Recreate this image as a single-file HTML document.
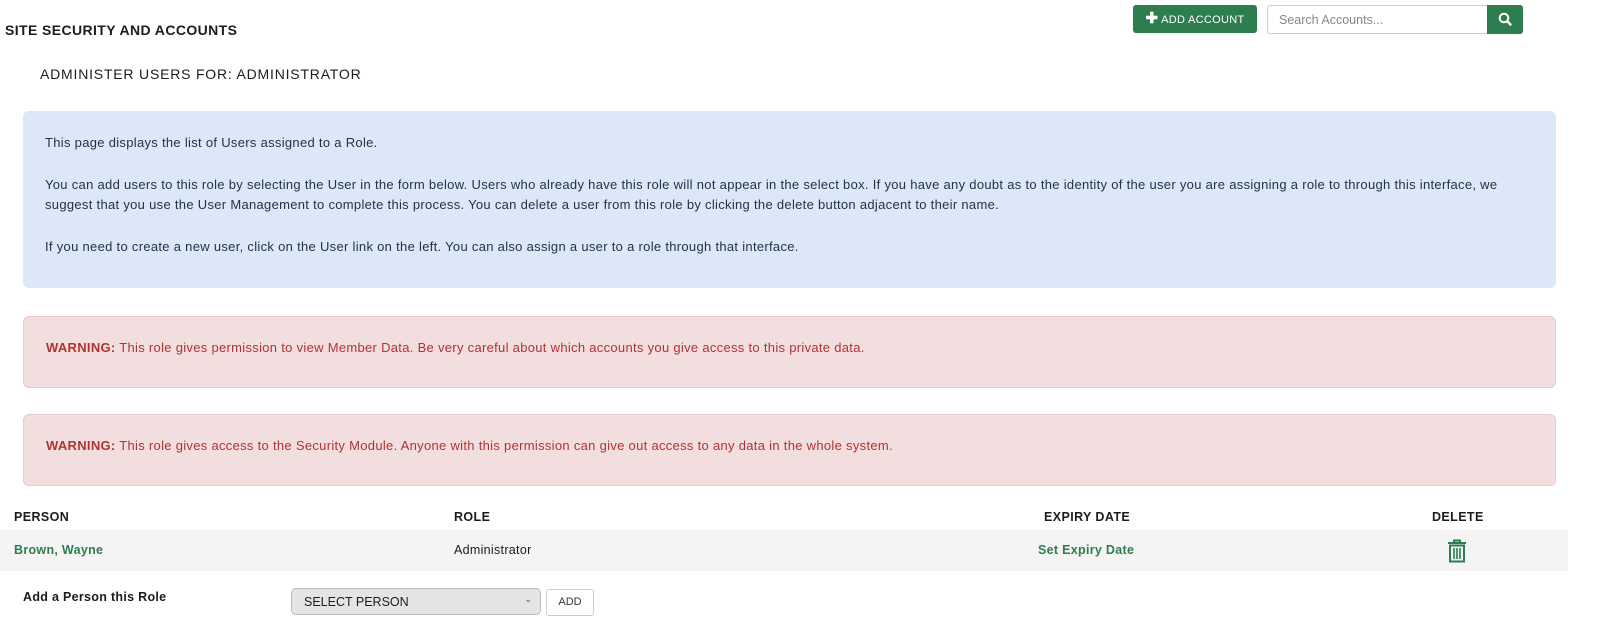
<!DOCTYPE html>
<html><head><meta charset="utf-8"><style>
*{box-sizing:border-box;margin:0;padding:0}
body{width:1600px;height:641px;background:#fff;font-family:"Liberation Sans",sans-serif;color:#1c1c1c;position:relative;overflow:hidden}
.abs{position:absolute}
h1{position:absolute;left:5px;top:22px;font-size:14px;font-weight:bold;letter-spacing:.4px}
h2{position:absolute;left:40px;top:66px;font-size:14px;font-weight:normal;letter-spacing:.8px}
.btn{left:1133px;top:5px;width:124px;height:28px;background:#2e7d4f;border-radius:3px;color:#fff;font-size:11px;letter-spacing:.3px;line-height:28px;text-align:center}
.search{left:1267px;top:5px;width:221px;height:29px;border:1px solid #ccc;border-radius:3px 0 0 3px;font-size:12.5px;color:#888;padding:7px 11px}
.sbtn{left:1487px;top:5px;width:36px;height:29px;background:#2e7d4f;border-radius:0 3px 3px 0}
.box{position:absolute;left:23px;width:1533px;border-radius:6px;font-size:13px;letter-spacing:.3px;line-height:20px;padding:0 22px}
.info{top:111px;height:177px;background:#dce8f8;color:#23324a;padding-top:22px}
.info p{margin-bottom:22px}
.warn{background:#f2dedf;border:1px solid #ecc9cb;color:#b23232;padding-top:21px;height:72px}
.hd{top:510px;font-size:12.5px;font-weight:bold;letter-spacing:.4px}
.row{left:0;top:530px;width:1568px;height:41px;background:#f4f4f4}
.g{color:#2e7d4f;font-weight:bold;font-size:12.5px;letter-spacing:.3px}
</style></head><body>
<h1>SITE SECURITY AND ACCOUNTS</h1>
<h2>ADMINISTER USERS FOR: ADMINISTRATOR</h2>
<div class="abs btn"><b style="font-size:15px">✚</b> ADD ACCOUNT</div>
<div class="abs search">Search Accounts...</div>
<div class="abs sbtn"><svg width="36" height="29" viewBox="0 0 36 29"><circle cx="17" cy="13" r="4.3" fill="none" stroke="#fff" stroke-width="2"/><path d="M20 16l3.5 3.5" stroke="#fff" stroke-width="2.4" stroke-linecap="round"/></svg></div>
<div class="box info">
<p>This page displays the list of Users assigned to a Role.</p>
<p>You can add users to this role by selecting the User in the form below. Users who already have this role will not appear in the select box. If you have any doubt as to the identity of the user you are assigning a role to through this interface, we suggest that you use the User Management to complete this process. You can delete a user from this role by clicking the delete button adjacent to their name.</p>
<p>If you need to create a new user, click on the User link on the left. You can also assign a user to a role through that interface.</p>
</div>
<div class="box warn" style="top:316px"><b>WARNING:</b> This role gives permission to view Member Data. Be very careful about which accounts you give access to this private data.</div>
<div class="box warn" style="top:414px"><b>WARNING:</b> This role gives access to the Security Module. Anyone with this permission can give out access to any data in the whole system.</div>
<div class="abs hd" style="left:14px">PERSON</div>
<div class="abs hd" style="left:454px">ROLE</div>
<div class="abs hd" style="left:1044px">EXPIRY DATE</div>
<div class="abs hd" style="left:1432px">DELETE</div>
<div class="abs row"></div>
<div class="abs g" style="left:14px;top:543px">Brown, Wayne</div>
<div class="abs" style="left:454px;top:543px;font-size:12.5px;letter-spacing:.3px">Administrator</div>
<div class="abs g" style="left:1038px;top:543px">Set Expiry Date</div>
<svg class="abs" style="left:1446px;top:539px" width="22" height="24" viewBox="0 0 22 24"><path d="M8 3V1.5h6V3M2 4h18" stroke="#2e7d4f" stroke-width="2" fill="none"/><rect x="4" y="6.5" width="14" height="16" fill="none" stroke="#2e7d4f" stroke-width="2"/><path d="M8 9v11M11 9v11M14 9v11" stroke="#2e7d4f" stroke-width="1.6"/></svg>
<div class="abs" style="left:23px;top:590px;font-size:12.5px;font-weight:bold;letter-spacing:.3px">Add a Person this Role</div>
<div class="abs" style="left:291px;top:588px;width:250px;height:27px;background:#e4e4e4;border:1px solid #bbb;border-radius:5px;font-size:12.5px;padding:6px 12px">SELECT PERSON<span style="position:absolute;right:8px;top:5px;font-size:9px;color:#555">⌄</span></div>
<div class="abs" style="left:546px;top:589px;width:48px;height:27px;border:1px solid #ccc;border-radius:3px;font-size:11px;text-align:center;line-height:25px;color:#333">ADD</div>
</body></html>
